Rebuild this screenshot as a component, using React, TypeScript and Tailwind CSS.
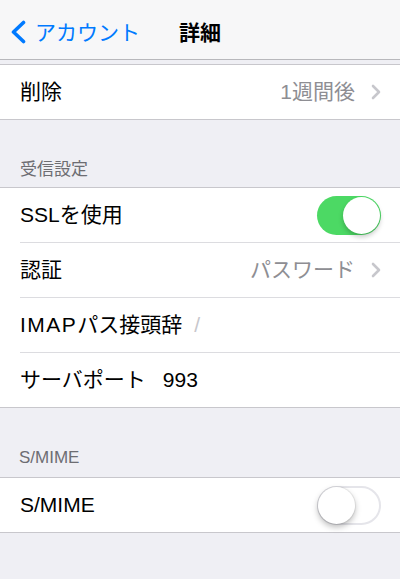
import React from "react";

const font = { fontFamily: '"Liberation Sans", "Noto Sans CJK JP", sans-serif' };

function Chevron() {
  return (
    <svg width="10" height="16" viewBox="0 0 10 16" className="shrink-0">
      <polyline points="2,2 8,8 2,14" fill="none" stroke="#c7c7cc" strokeWidth="2.6" strokeLinecap="round" strokeLinejoin="round" />
    </svg>
  );
}

function Toggle({ on }: { on: boolean }) {
  return (
    <div
      className={
        on
          ? "relative w-[64px] h-[39px] rounded-full bg-[#4cd964] shrink-0"
          : "relative w-[64px] h-[39px] rounded-full bg-white border-2 border-[#e5e5ea] shrink-0"
      }
    >
      <div
        className={
          on
            ? "absolute top-[1px] right-[1px] w-[37px] h-[37px] rounded-full bg-white shadow-[0_3px_5px_rgba(0,0,0,0.22)]"
            : "absolute top-[-1px] left-[-1px] w-[37px] h-[37px] rounded-full bg-white shadow-[0_3px_6px_rgba(0,0,0,0.28),0_0_0_1px_rgba(0,0,0,0.06)]"
        }
      />
    </div>
  );
}

function Row({
  children,
  sep,
}: {
  children: React.ReactNode;
  sep?: boolean;
}) {
  return (
    <div className="bg-white">
      <div className="h-[54px] flex items-center pl-[20px] pr-[19px]">{children}</div>
      {sep && <div className="ml-[20px] h-px bg-[#dcdce0]" />}
    </div>
  );
}

export default function App() {
  return (
    <div className="w-[400px] h-[579px] bg-[#efeff4] overflow-hidden" style={font}>
      {/* Nav */}
      <div className="relative h-[60px] bg-[#f7f7f8] border-b border-[#b8b8bc] flex items-center pt-[5px]">
        <div className="flex items-center pl-[10px]">
          <svg width="17" height="24" viewBox="0 0 17 24">
            <polyline points="13.5,2.5 3.5,12 13.5,21.5" fill="none" stroke="#007aff" strokeWidth="3.6" strokeLinecap="round" strokeLinejoin="round" />
          </svg>
          <span className="ml-[8px] text-[21px] text-[#007aff] leading-none">アカウント</span>
        </div>
        <div className="absolute left-0 right-0 top-[5px] bottom-0 flex items-center justify-center pointer-events-none">
          <span className="text-[21px] font-bold text-black leading-none">詳細</span>
        </div>
      </div>

      <div className="h-[4px]" />

      <div className="border-t border-b border-[#c8c7cc]">
        <Row>
          <span className="text-[21px] text-black">削除</span>
          <span className="ml-auto text-[21px] text-[#8e8e93] mr-[16px]">1週間後</span>
          <Chevron />
        </Row>
      </div>

      <div className="h-[67px] flex items-end pl-[20px] pb-[9px]">
        <span className="text-[17px] text-[#6d6d72] leading-none">受信設定</span>
      </div>

      <div className="border-t border-b border-[#c8c7cc]">
        <Row sep>
          <span className="text-[21px] text-black">SSLを使用</span>
          <div className="ml-auto">
            <Toggle on />
          </div>
        </Row>
        <Row sep>
          <span className="text-[21px] text-black">認証</span>
          <span className="ml-auto text-[21px] text-[#8e8e93] mr-[16px]">パスワード</span>
          <Chevron />
        </Row>
        <Row sep>
          <span className="text-[21px] text-black">
            <span className="tracking-[1.5px]">IMAP</span>パス接頭辞
          </span>
          <span className="ml-[12px] text-[21px] text-[#c7c7cc]">/</span>
        </Row>
        <Row>
          <span className="text-[21px] text-black">サーバポート</span>
          <span className="ml-[17px] text-[21px] text-black">993</span>
        </Row>
      </div>

      <div className="h-[69px] flex items-end pl-[19px] pb-[11px]">
        <span className="text-[17px] text-[#6d6d72] leading-none">S/MIME</span>
      </div>

      <div className="border-t border-b border-[#c8c7cc]">
        <Row>
          <span className="text-[21px] text-black">S/MIME</span>
          <div className="ml-auto">
            <Toggle on={false} />
          </div>
        </Row>
      </div>
    </div>
  );
}
